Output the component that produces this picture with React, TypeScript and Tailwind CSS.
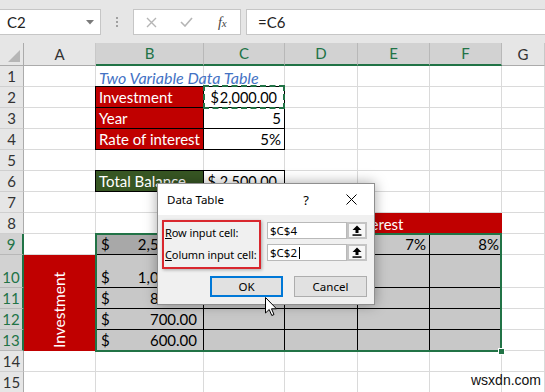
import React from 'react';

const RS = ['row-start-1','row-start-2','row-start-3','row-start-4','row-start-5','row-start-6','row-start-7','row-start-8','row-start-9','row-start-10','row-start-11','row-start-12','row-start-13','row-start-14','row-start-15','row-start-16'];
const CS = ['col-start-1','col-start-2','col-start-3','col-start-4','col-start-5','col-start-6','col-start-7','col-start-8'];

const COLS = ['A','B','C','D','E','F','G'];

function UpArrowBtn() {
  return (
    <div className="w-[20px] h-[17px] border-2 border-[#c4c4c4] bg-[#f7f7f7] flex items-center justify-center">
      <svg width="10" height="11" viewBox="0 0 10 11">
        <path d="M5 0.5 L9.5 5 L6.5 5 L6.5 8 L3.5 8 L3.5 5 L0.5 5 Z" fill="#000" />
        <rect x="0.5" y="9.3" width="9" height="1.5" fill="#000" />
      </svg>
    </div>
  );
}

export default function App() {
  const font = { fontFamily: 'Lato, "Liberation Sans", sans-serif' };
  const cellT = 'flex items-end pb-[1px] leading-[17px]';
  return (
    <div className="relative w-[545px] h-[392px] overflow-hidden bg-white" style={font}>
      {/* Formula bar */}
      <div className="h-[43px] bg-[#e6e6e6] flex items-start pt-[9px]">
        <div className="w-[101px] h-[26px] bg-white border border-l-0 border-[#c6c6c6] flex items-center pl-[7px] pr-[6px] text-[15px] text-[#222]">
          <span className="flex-1">C2</span>
          <svg width="8" height="5" viewBox="0 0 8 5"><path d="M0 0 L8 0 L4 4.5 Z" fill="#7a7a7a" /></svg>
        </div>
        <div className="w-[32px] h-[26px] flex flex-col items-center justify-center gap-[2px]">
          <span className="w-[2px] h-[2px] bg-[#a0a0a0]" />
          <span className="w-[2px] h-[2px] bg-[#a0a0a0]" />
          <span className="w-[2px] h-[2px] bg-[#a0a0a0]" />
        </div>
        <div className="w-[108px] h-[26px] bg-white border border-[#c6c6c6] flex items-center">
          <div className="w-[36px] flex justify-center">
            <svg width="11" height="11" viewBox="0 0 11 11"><path d="M1 1 L10 10 M10 1 L1 10" stroke="#b5b5b5" strokeWidth="1.4" /></svg>
          </div>
          <div className="w-[36px] flex justify-center">
            <svg width="13" height="10" viewBox="0 0 13 10"><path d="M1 5 L5 9 L12 1" stroke="#b5b5b5" strokeWidth="1.6" fill="none" /></svg>
          </div>
          <div className="w-[36px] flex justify-center items-baseline text-[14px] italic text-[#444]" style={{ fontFamily: '"Liberation Serif", serif' }}>
            <span>f</span><span className="text-[11px]">x</span>
          </div>
        </div>
        <div className="ml-[5px] flex-1 h-[26px] bg-white border border-r-0 border-[#c6c6c6] flex items-center pl-[11px] text-[15px] text-[#222]">
          =C6
        </div>
      </div>

      {/* Sheet grid */}
      <div className="grid grid-cols-[24px_72px_108px_81px_73px_72px_72px_1fr] grid-rows-[23px_repeat(9,21px)_33px_repeat(5,21px)] text-[15px] text-black">
        {/* corner */}
        <div className="row-start-1 col-start-1 bg-[#e6e6e6] border-r border-b border-[#ababab] relative">
          <svg className="absolute right-[3px] bottom-[3px]" width="12" height="12" viewBox="0 0 12 12"><path d="M12 0 L12 12 L0 12 Z" fill="#b6b6b6" /></svg>
        </div>
        {/* column headers */}
        {COLS.map((c, i) => {
          const sel = i >= 1 && i <= 5;
          return (
            <div
              key={c}
              className={`row-start-1 ${CS[i + 1]} flex items-center justify-center text-[15px] border-r ${
                sel
                  ? 'bg-[#d2d2d2] text-[#217346] border-r-[#b8b8b8] border-b-2 border-b-[#217346]'
                  : 'bg-[#e6e6e6] text-[#333] border-r-[#c8c8c8] border-b border-b-[#ababab]'
              }`}
            >
              {c}
            </div>
          );
        })}
        {/* row headers + cells */}
        {Array.from({ length: 15 }, (_, k) => {
          const r = k + 1;
          const sel = r >= 9 && r <= 13;
          return (
            <React.Fragment key={r}>
              <div
                className={`${RS[r]} col-start-1 flex items-end justify-center pb-[1px] leading-[18px] text-[15px] border-b ${
                  sel
                    ? 'bg-[#d2d2d2] text-[#217346] border-b-[#b8b8b8] border-r-2 border-r-[#217346]'
                    : 'bg-[#e6e6e6] text-[#333] border-b-[#cfcfcf] border-r border-r-[#ababab]'
                }`}
              >
                {r}
              </div>
              {COLS.map((c, i) => (
                <div key={c} className={`${RS[r]} ${CS[i + 1]} bg-white border-r border-b border-[#dadada]`} />
              ))}
            </React.Fragment>
          );
        })}

        {/* Row 1 title */}
        <div className={`row-start-2 col-start-3 col-span-3 ${cellT} pl-[3px] italic text-[#4472c4] text-[16px] whitespace-nowrap`}>
          Two Variable Data Table
        </div>

        {/* B2:C4 */}
        <div className={`row-start-3 col-start-3 -mt-px -ml-px bg-[#c00000] text-white border border-black ${cellT} pl-[3px]`}>Investment</div>
        <div className={`row-start-3 col-start-4 -mt-px bg-white border-t border-r border-b border-black ${cellT} justify-end pr-[7px] text-[14.5px]`}>
          <span>$</span><span className="ml-[1px]">2,000.00</span>
        </div>
        <div className={`row-start-4 col-start-3 -ml-px bg-[#c00000] text-white border-l border-r border-b border-black ${cellT} pl-[3px]`}>Year</div>
        <div className={`row-start-4 col-start-4 bg-white border-r border-b border-black ${cellT} justify-end pr-[3px]`}>5</div>
        <div className={`row-start-5 col-start-3 -ml-px bg-[#c00000] text-white border-l border-r border-b border-black ${cellT} pl-[3px] whitespace-nowrap`}>Rate of interest</div>
        <div className={`row-start-5 col-start-4 bg-white border-r border-b border-black ${cellT} justify-end pr-[3px]`}>5%</div>
        {/* dashed copy border */}
        <div className="row-start-3 col-start-4 -mt-[2px] -ml-px -mb-px border-2 border-dashed border-[#217346]" />

        {/* Row 6 */}
        <div className={`row-start-7 col-start-3 -mt-px -ml-px bg-[#375623] text-white border border-black ${cellT} pl-[3px]`}>Total Balance</div>
        <div className={`row-start-7 col-start-4 -mt-px bg-white border-t border-r border-b border-black ${cellT} justify-end pr-[7px] text-[14.5px]`}>
          <span>$</span><span className="ml-[4px]">2,500.00</span>
        </div>

        {/* Row 8 merged header */}
        <div className={`row-start-9 col-start-4 col-span-4 bg-[#c00000] text-white ${cellT} justify-center`}>Rate of interest</div>

        {/* Row 9 */}
        <div className={`row-start-10 col-start-3 bg-[#a8a8a8] border-r border-b border-black ${cellT} justify-between pl-[5px] pr-[6px]`}>
          <span>$</span><span>2,500.00</span>
        </div>
        <div className={`row-start-10 col-start-4 bg-[#c8c8c8] border-r border-b border-black ${cellT} justify-end pr-[3px]`}>5%</div>
        <div className={`row-start-10 col-start-5 bg-[#c8c8c8] border-r border-b border-black ${cellT} justify-end pr-[3px]`}>6%</div>
        <div className={`row-start-10 col-start-6 bg-[#c8c8c8] border-r border-b border-black ${cellT} justify-end pr-[3px]`}>7%</div>
        <div className={`row-start-10 col-start-7 bg-[#c8c8c8] border-b border-black ${cellT} justify-end pr-[3px]`}>8%</div>

        {/* Rows 10-13 */}
        {[
          ['row-start-11', '1,000.00'],
          ['row-start-12', '800.00'],
          ['row-start-13', '700.00'],
          ['row-start-14', '600.00'],
        ].map(([rs, v]) => (
          <React.Fragment key={rs}>
            <div className={`${rs} col-start-3 bg-[#c8c8c8] border-r border-b border-black ${cellT} justify-between pl-[5px] pr-[6px]`}>
              <span>$</span><span>{v}</span>
            </div>
            <div className={`${rs} col-start-4 bg-[#c8c8c8] border-r border-b border-black`} />
            <div className={`${rs} col-start-5 bg-[#c8c8c8] border-r border-b border-black`} />
            <div className={`${rs} col-start-6 bg-[#c8c8c8] border-r border-b border-black`} />
            <div className={`${rs} col-start-7 bg-[#c8c8c8] border-b border-black`} />
          </React.Fragment>
        ))}

        {/* Investment vertical merged */}
        <div className="row-start-11 row-span-4 col-start-2 bg-[#c00000] text-white flex items-center justify-center pt-[14px]">
          <span className="[writing-mode:vertical-rl] rotate-180 text-[15.5px] leading-none">Investment</span>
        </div>

        {/* Selection border */}
        <div className="row-start-10 row-span-5 col-start-3 col-span-5 -mt-px -ml-px -mb-px border-2 border-[#217346] relative">
          <div className="absolute -right-[5px] -bottom-[5px] w-[7px] h-[7px] bg-[#217346] border border-white" />
        </div>
      </div>

      {/* Dialog */}
      <div
        className="absolute left-[157px] top-[183px] w-[218px] h-[122px] bg-[#f0f0f0] border border-[#8f8f8f] shadow-[0_0_12px_rgba(0,0,0,0.35)] flex flex-col text-[11.5px] leading-[14px] text-black"
        style={{ fontFamily: '"Noto Sans", "Open Sans", sans-serif' }}
      >
        <div className="h-[31px] bg-white flex items-center pl-[9px] pr-[17px]">
          <span className="flex-1">Data Table</span>
          <span className="mr-[37px] text-[13px]">?</span>
          <svg width="11" height="11" viewBox="0 0 11 11"><path d="M0.5 0.5 L10.5 10.5 M10.5 0.5 L0.5 10.5" stroke="#000" strokeWidth="1" /></svg>
        </div>
        <div className="flex pl-[4px] pt-[5px]">
          <div className="w-[99px] h-[49px] border-2 border-[#d9272e] shadow-[1px_1px_3px_rgba(0,0,0,0.3)] flex flex-col justify-around pl-[1px] pb-[1px] whitespace-nowrap text-[11px] tracking-[-0.1px]">
            <div className="flex"><span className="underline">R</span><span>ow input cell:</span></div>
            <div className="flex"><span className="underline">C</span><span>olumn input cell:</span></div>
          </div>
          <div className="ml-[6px] mt-[2px] flex flex-col gap-[5px]">
            <div className="flex">
              <div className="w-[80px] h-[17px] bg-white border border-[#b9b9b9] flex items-center pl-[2px]">$C$4</div>
              <UpArrowBtn />
            </div>
            <div className="flex">
              <div className="w-[80px] h-[17px] bg-white border border-[#b9b9b9] flex items-center pl-[2px]">
                <span>$C$2</span><div className="w-px h-[12px] bg-black ml-[2px]" />
              </div>
              <UpArrowBtn />
            </div>
          </div>
        </div>
        <div className="flex pl-[52px] mt-[7px] gap-[11px]">
          <div className="w-[73px] h-[21px] bg-[#e1e1e1] border-2 border-[#0078d7] flex items-center justify-center">OK</div>
          <div className="w-[73px] h-[21px] bg-[#e1e1e1] border border-[#adadad] flex items-center justify-center">Cancel</div>
        </div>
      </div>

      {/* Cursor */}
      <svg className="absolute left-[265px] top-[297px]" width="13" height="20" viewBox="0 0 13 20">
        <path d="M0.5 0.5 L0.5 16 L4.2 12.5 L6.8 18.5 L9 17.5 L6.5 11.8 L11.5 11.8 Z" fill="#fff" stroke="#000" strokeWidth="1" strokeLinejoin="round" />
      </svg>

      {/* Watermark */}
      <div className="absolute left-[471px] top-[370px] text-[14px] text-[#111]" style={{ fontFamily: '"Liberation Sans", sans-serif' }}>
        wsxdn.com
      </div>
    </div>
  );
}
